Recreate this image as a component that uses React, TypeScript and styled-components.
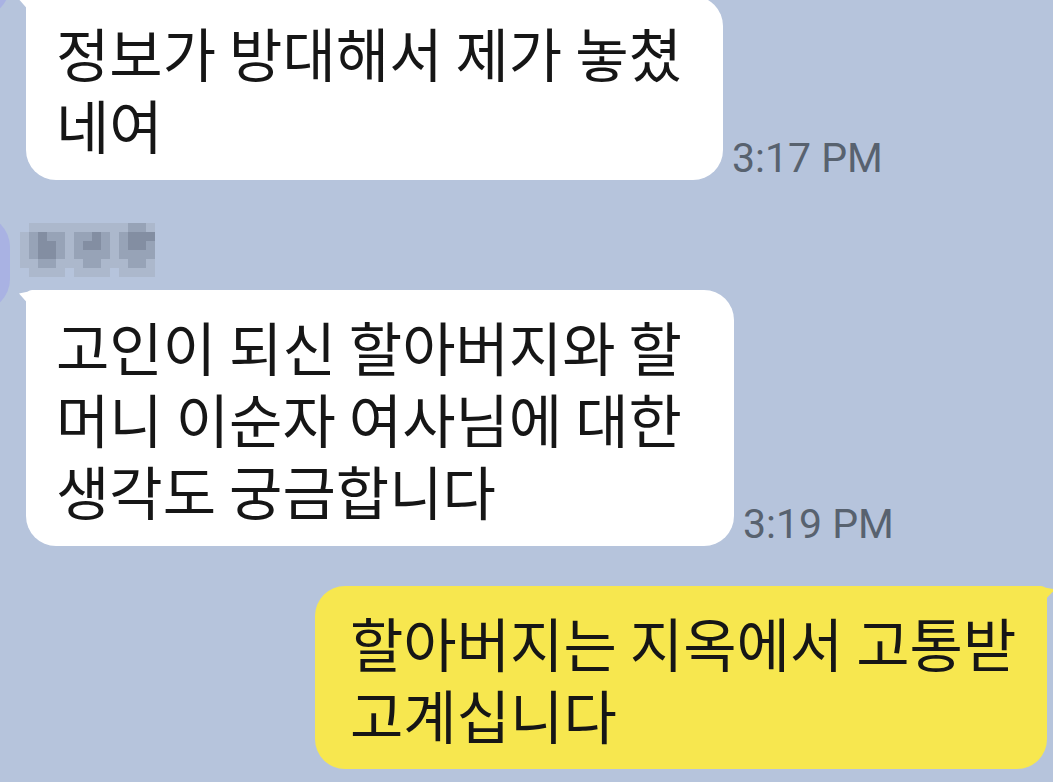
import styled, { createGlobalStyle } from "styled-components";

const GlobalStyle = createGlobalStyle`
  html, body {
    margin: 0;
    padding: 0;
  }
  body {
    background: #b6c4dc;
    font-family: "Noto Sans CJK KR", "Noto Sans", sans-serif;
  }
`;

const Viewport = styled.div`
  width: 1053px;
  height: 782px;
  overflow: hidden;
  background: #b6c4dc;
`;

// the feed is scrolled: first sender's avatar and name sit above the top edge
const Feed = styled.div`
  display: flex;
  flex-direction: column;
  margin: -79px 6px 0 -86px;
`;

const ReceivedRow = styled.div<{ $gap?: number }>`
  display: flex;
  align-items: flex-start;
  gap: 10px;
  margin-top: ${(p) => p.$gap ?? 0}px;
`;

const Avatar = styled.div`
  flex: none;
  width: 96px;
  height: 96px;
  border-radius: 32px;
  background: #a9b2e3;
`;

const Column = styled.div`
  display: flex;
  flex-direction: column;
  align-items: flex-start;
`;

const Mosaic = styled.div`
  display: grid;
  grid-template-columns: repeat(15, 9px);
  grid-auto-rows: 9px;
  margin-top: 8px;
`;

const Cell = styled.div<{ $level: number }>`
  background: ${(p) =>
    ["transparent", "#acb8cc", "#97a3b7", "#838ea2"][p.$level]};
`;

const MessageLine = styled.div`
  display: flex;
  align-items: flex-end;
  gap: 9px;
  margin-top: 13px;
  margin-left: 6px;
`;

const Bubble = styled.div<{ $width: number }>`
  position: relative;
  box-sizing: border-box;
  width: ${(p) => p.$width}px;
  padding: 20px 0 20px 30px;
  background: #ffffff;
  border-radius: 6px 30px 30px 30px;
  font-size: 58px;
  line-height: 72px;
  color: #161616;
  white-space: nowrap;

  &::before {
    content: "";
    position: absolute;
    left: -7px;
    top: 1px;
    width: 12px;
    height: 16px;
    background: #ffffff;
    clip-path: polygon(0 15%, 100% 0, 100% 100%);
  }
`;

const Time = styled.span`
  font-family: Roboto, "Liberation Sans", sans-serif;
  font-size: 41px;
  line-height: 1;
  color: #58626f;
  margin-bottom: 1px;
  white-space: nowrap;
`;

const SentRow = styled.div`
  display: flex;
  justify-content: flex-end;
  margin-top: 40px;
`;

const SentBubble = styled.div<{ $width: number }>`
  position: relative;
  box-sizing: border-box;
  width: ${(p) => p.$width}px;
  padding: 20px 0 19px 35px;
  background: #f7e74f;
  border-radius: 30px 6px 30px 30px;
  font-size: 58px;
  line-height: 72px;
  color: #161616;
  white-space: nowrap;

  &::after {
    content: "";
    position: absolute;
    right: -8px;
    top: 1px;
    width: 13px;
    height: 16px;
    background: #f7e74f;
    clip-path: polygon(0 0, 100% 15%, 0 100%);
  }
`;

const nameMosaic = [
  "011111111111221",
  "123221223212333",
  "123321233212332",
  "123321222212222",
  "112211122111221",
  "011110111101111",
];

const Name = () => (
  <Mosaic>
    {nameMosaic.flatMap((row, r) =>
      row.split("").map((v, c) => <Cell key={`${r}-${c}`} $level={Number(v)} />)
    )}
  </Mosaic>
);

const App = () => {
  return (
    <Viewport>
      <GlobalStyle />
      <Feed>
        <ReceivedRow>
          <Avatar />
          <Column>
            <Name />
            <MessageLine>
              <Bubble $width={697}>
                정보가 방대해서 제가 놓쳤
                <br />
                네여
              </Bubble>
              <Time>3:17 PM</Time>
            </MessageLine>
          </Column>
        </ReceivedRow>

        <ReceivedRow $gap={35}>
          <Avatar />
          <Column>
            <Name />
            <MessageLine>
              <Bubble $width={708}>
                고인이 되신 할아버지와 할
                <br />
                머니 이순자 여사님에 대한
                <br />
                생각도 궁금합니다
              </Bubble>
              <Time>3:19 PM</Time>
            </MessageLine>
          </Column>
        </ReceivedRow>

        <SentRow>
          <SentBubble $width={732}>
            할아버지는 지옥에서 고통받
            <br />
            고계십니다
          </SentBubble>
        </SentRow>
      </Feed>
    </Viewport>
  );
};

export default App;
